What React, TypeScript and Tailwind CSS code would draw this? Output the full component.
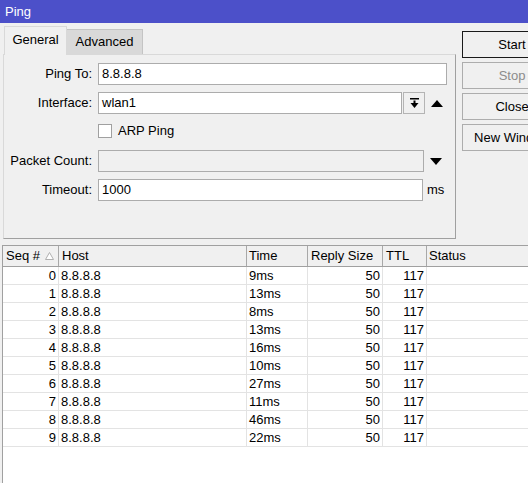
import React from 'react';

const results = [
  { seq: 0, time: '9ms' },
  { seq: 1, time: '13ms' },
  { seq: 2, time: '8ms' },
  { seq: 3, time: '13ms' },
  { seq: 4, time: '16ms' },
  { seq: 5, time: '10ms' },
  { seq: 6, time: '27ms' },
  { seq: 7, time: '11ms' },
  { seq: 8, time: '46ms' },
  { seq: 9, time: '22ms' },
];

function Label({ text }: { text: string }) {
  return <div className="w-[89px] shrink-0 text-right pr-px whitespace-nowrap">{text}</div>;
}

function Triangle({ up }: { up?: boolean }) {
  return (
    <svg width="12" height="7" viewBox="0 0 12 7" className="ml-[6px]">
      {up ? <polygon points="0,7 12,7 6,0" fill="#000" /> : <polygon points="0,0 12,0 6,7" fill="#000" />}
    </svg>
  );
}

function SideButton({ children, primary, disabled }: { children: React.ReactNode; primary?: boolean; disabled?: boolean }) {
  return (
    <div
      className={`w-[100px] h-[27px] flex items-center justify-center whitespace-nowrap bg-[#f0f0f0] border ${
        primary ? 'border-[#1a1a1a]' : 'border-[#adadad]'
      } ${disabled ? 'text-[#8c8c8c]' : 'text-black'}`}
    >
      {children}
    </div>
  );
}

export default function App() {
  return (
    <div
      className="w-[528px] h-[483px] overflow-hidden bg-[#f0f0f0] flex flex-col text-[13px] text-black"
      style={{ fontFamily: '"Liberation Sans", Arial, sans-serif' }}
    >
      {/* title bar */}
      <div className="h-[23px] shrink-0 bg-[#4c50c9] text-white pl-[5px] leading-[23px]">Ping</div>

      <div className="flex h-[222px] shrink-0">
        {/* left: tabs + form */}
        <div className="w-[456px] shrink-0 pl-[3px] flex flex-col">
          <div className="h-[31px] flex items-end pl-px">
            <div className="relative z-10 -mb-px h-[29px] w-[63px] bg-[#f0f0f0] border border-b-0 border-[#d9d9d9] flex items-center justify-center pb-[2px]">
              General
            </div>
            <div className="h-[25px] w-[76px] bg-[#d9d9d9] border border-l-0 border-b-0 border-[#c4c4c4] flex items-center justify-center">
              Advanced
            </div>
          </div>
          <div className="h-[185px] border border-[#d9d9d9] border-r-[#a0a0a0] border-b-[#a0a0a0] flex flex-col">
            <div className="mt-[8px] h-[22px] flex items-center">
              <Label text="Ping To:" />
              <div className="ml-[5px] w-[349px] h-[22px] bg-white border border-[#acacac] pl-[3px] leading-[20px]">8.8.8.8</div>
            </div>
            <div className="mt-[7px] h-[22px] flex items-center">
              <Label text="Interface:" />
              <div className="ml-[5px] w-[304px] h-[22px] bg-white border border-[#acacac] pl-[3px] leading-[20px]">wlan1</div>
              <div className="ml-px w-[22px] h-[22px] border border-[#b4b4b4] bg-[#f0f0f0] flex items-center justify-center">
                <svg width="9" height="10" viewBox="0 0 9 10">
                  <rect x="0" y="0" width="9" height="1.5" fill="#000" />
                  <rect x="3.5" y="2.5" width="2" height="3" fill="#000" />
                  <polygon points="0.5,5 8.5,5 4.5,10" fill="#000" />
                </svg>
              </div>
              <Triangle up />
            </div>
            <div className="mt-[6px] h-[22px] flex items-center">
              <div className="w-[89px] shrink-0" />
              <div className="ml-[5px] w-[14px] h-[14px] bg-white border border-[#a0a0a0]" />
              <div className="ml-[6px]">ARP Ping</div>
            </div>
            <div className="mt-[8px] h-[22px] flex items-center">
              <Label text="Packet Count:" />
              <div className="ml-[5px] w-[326px] h-[22px] bg-[#f0f0f0] border border-[#acacac]" />
              <Triangle />
            </div>
            <div className="mt-[7px] h-[22px] flex items-center">
              <Label text="Timeout:" />
              <div className="ml-[5px] w-[325px] h-[22px] bg-white border border-[#acacac] pl-[3px] leading-[20px]">1000</div>
              <div className="ml-[4px]">ms</div>
            </div>
          </div>
        </div>

        {/* right: buttons */}
        <div className="ml-[6px] mt-[8px] flex flex-col gap-[4px] shrink-0">
          <SideButton primary>Start</SideButton>
          <SideButton disabled>Stop</SideButton>
          <SideButton>Close</SideButton>
          <SideButton>New Window</SideButton>
        </div>
      </div>

      {/* results table */}
      <div className="flex-1 ml-[2px] border-l border-[#a0a0a0] bg-white flex flex-col w-[560px]">
        <div className="h-[22px] flex bg-[#f0f0f0] border-t border-b border-[#a0a0a0]">
          <div className="w-[56px] shrink-0 border-r border-[#a8a8a8] pl-[3px] flex items-center">
            Seq #
            <svg width="9" height="8" viewBox="0 0 9 8" className="ml-[5px]">
              <polygon points="0.5,7.5 8.5,7.5 4.5,0.5" fill="#fff" stroke="#b0b0b0" strokeWidth="1" />
            </svg>
          </div>
          <div className="w-[188px] shrink-0 border-r border-[#a8a8a8] pl-[3px] flex items-center">Host</div>
          <div className="w-[61px] shrink-0 border-r border-[#a8a8a8] pl-[2px] flex items-center">Time</div>
          <div className="w-[75px] shrink-0 border-r border-[#a8a8a8] pl-[3px] flex items-center">Reply Size</div>
          <div className="w-[44px] shrink-0 border-r border-[#a8a8a8] pl-[3px] flex items-center">TTL</div>
          <div className="flex-1 pl-[2px] flex items-center">Status</div>
        </div>
        {results.map((r) => (
          <div key={r.seq} className="h-[18px] flex border-b border-[#e3e3e3] leading-[17px]">
            <div className="w-[56px] shrink-0 border-r border-[#e3e3e3] text-right pr-[2px]">{r.seq}</div>
            <div className="w-[188px] shrink-0 border-r border-[#e3e3e3] pl-[2px]">8.8.8.8</div>
            <div className="w-[61px] shrink-0 border-r border-[#e3e3e3] pl-[2px]">{r.time}</div>
            <div className="w-[75px] shrink-0 border-r border-[#e3e3e3] text-right pr-[2px]">50</div>
            <div className="w-[44px] shrink-0 border-r border-[#e3e3e3] text-right pr-[2px]">117</div>
            <div className="flex-1" />
          </div>
        ))}
      </div>
    </div>
  );
}
